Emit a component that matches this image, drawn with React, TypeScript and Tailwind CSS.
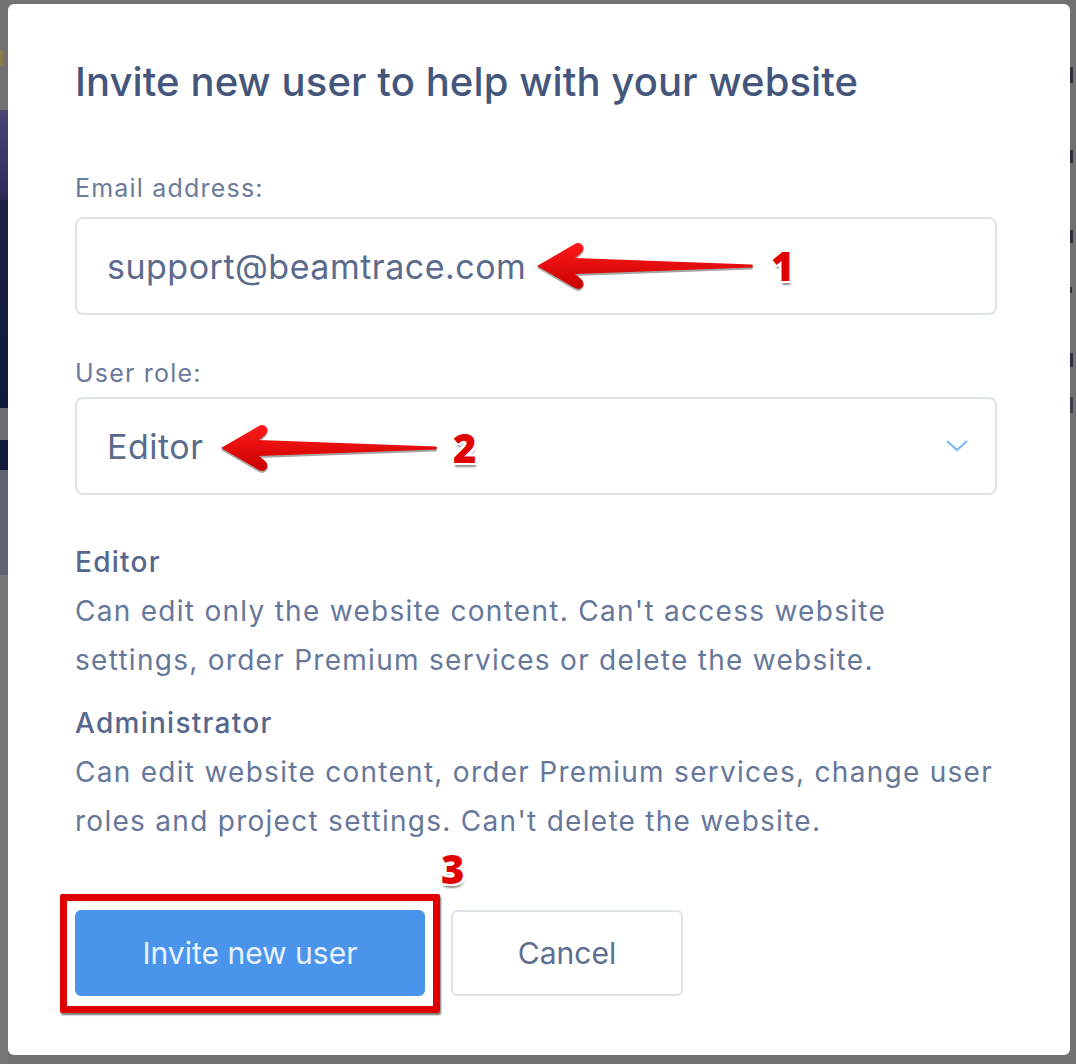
import React from 'react';

const Arrow: React.FC<{ className: string; id: string }> = ({ className, id }) => (
  <svg className={className} width="220" height="50" viewBox="0 0 220 50" fill="none">
    <defs>
      <linearGradient id={id} x1="0" y1="0" x2="0" y2="1">
        <stop offset="0" stopColor="#ff1a1a" />
        <stop offset="1" stopColor="#c80000" />
      </linearGradient>
    </defs>
    <path
      d="M2,27 L39,5.5 Q45,2 48,7 Q50,11 45,15 L40,19 L217,25.5 Q219,27 217,28.5 L40,35 L45,39 Q50,43 48,47 Q45,52 39,48.5 Z"
      fill="#000"
      opacity="0.35"
    />
    <path
      d="M2,25 L39,3.5 Q45,0 48,5 Q50,9 45,13 L40,17 L217,23.5 Q219,25 217,26.5 L40,33 L45,37 Q50,41 48,45 Q45,50 39,46.5 Z"
      fill={`url(#${id})`}
    />
  </svg>
);

const Badge: React.FC<{ n: string; className: string }> = ({ n, className }) => (
  <span
    className={`absolute text-[40px] leading-none font-extrabold text-[#e00000] [font-family:'Open_Sans',sans-serif] [text-shadow:-2px_-2px_0_#fff,2px_-2px_0_#fff,-2px_2px_0_#fff,2px_2px_0_#fff,0_-2px_0_#fff,0_2px_0_#fff,-2px_0_0_#fff,2px_0_0_#fff,1px_4px_2px_rgba(0,0,0,0.45)] ${className}`}
  >
    {n}
  </span>
);

const App: React.FC = () => {
  return (
    <div className="w-[1076px] h-[1064px] bg-[#727272] flex overflow-hidden [font-family:Inter,sans-serif]">
      {/* page behind the overlay, left edge */}
      <div className="w-[8px] shrink-0 flex flex-col">
        <div className="h-[50px] bg-[#717171]" />
        <div className="h-[16px] bg-[#8a7a4a] w-[3px]" />
        <div className="h-[44px] bg-[#717171]" />
        <div className="h-[90px] bg-gradient-to-b from-[#4b4675] to-[#2a2a55]" />
        <div className="h-[208px] bg-gradient-to-b from-[#1c2146] to-[#0f1a3b]" />
        <div className="h-[32px] bg-[#6c6e74]" />
        <div className="h-[30px] bg-[#111a3b]" />
        <div className="h-[105px] bg-[#5f6371]" />
        <div className="flex-1 bg-[#777777]" />
      </div>

      <div className="w-[1062px] shrink-0 pt-[4px] pb-[9px]">
        <div className="relative h-full bg-white rounded-[6px] pl-[67px] pr-[73px] pt-[54px]">
          <h1 className="text-[40px] leading-[48px] font-medium text-[#44567c] whitespace-nowrap tracking-[0.1px]">
            Invite new user to help with your website
          </h1>

          <label className="block mt-[66px] text-[25px] leading-[32px] tracking-[1.2px] text-[#6b7b9b]">Email address:</label>
          <div className="mt-[13px] h-[98px] border-2 border-[#dfe3ea] rounded-[8px] flex items-center px-[30px] text-[34px] tracking-[0.5px] text-[#5b6b8c]">
            support@beamtrace.com
          </div>

          <label className="block mt-[42px] text-[25px] leading-[32px] tracking-[1.2px] text-[#6b7b9b]">User role:</label>
          <div className="mt-[8px] h-[98px] border-2 border-[#dfe3ea] rounded-[8px] flex items-center justify-between pl-[30px] pr-[26px] text-[34px] tracking-[0.5px] text-[#5b6b8c]">
            <span>Editor</span>
            <svg width="24" height="14" viewBox="0 0 24 14" fill="none">
              <path d="M2 2 L12 11 L22 2" stroke="#7cb8f4" strokeWidth="2.2" />
            </svg>
          </div>

          <div className="mt-[43px] text-[28px] leading-[49px] tracking-[1.28px] text-[#66779a] whitespace-nowrap">
            <div className="font-medium text-[#55678c]">Editor</div>
            <div>Can edit only the website content. Can't access website</div>
            <div>settings, order Premium services or delete the website.</div>
            <div className="mt-[14px] font-medium text-[#55678c]">Administrator</div>
            <div>Can edit website content, order Premium services, change user</div>
            <div>roles and project settings. Can't delete the website.</div>
          </div>

          <div className="mt-[64px] flex gap-[26px]">
            <div className="relative">
              <button className="w-[350px] h-[86px] rounded-[6px] bg-[#4a94ec] text-[#eaf2fd] text-[30px]">
                Invite new user
              </button>
              <div className="absolute -left-[15px] -top-[16px] w-[380px] h-[119px] border-[7px] border-[#e10000] rounded-[2px] shadow-[1px_2px_2px_rgba(0,0,0,0.55)]" />
            </div>
            <button className="w-[232px] h-[86px] rounded-[6px] border-2 border-[#dfe3ea] bg-white text-[#5d6e90] text-[30px]">
              Cancel
            </button>
          </div>

          {/* annotations */}
          <Arrow id="g1" className="absolute left-[527px] top-[237px]" />
          <Badge n="1" className="left-[763px] top-[242px]" />
          <Arrow id="g2" className="absolute left-[211px] top-[419px]" />
          <Badge n="2" className="left-[445px] top-[424px]" />
          <Badge n="3" className="left-[433px] top-[845px]" />
        </div>
      </div>

      {/* page behind the overlay, right edge */}
      <div className="flex-1 flex flex-col">
        <div className="h-[67px]" />
        <div className="h-[16px] w-[3px] bg-[#2b2f3d]" />
        <div className="h-[67px]" />
        <div className="h-[13px] w-[3px] bg-[#2b2f3d]" />
        <div className="h-[67px]" />
        <div className="h-[13px] w-[3px] bg-[#2b2f3d]" />
        <div className="h-[44px]" />
        <div className="h-[6px] w-[2px] bg-[#2b2f3d]" />
        <div className="h-[60px]" />
        <div className="h-[14px] w-[3px] bg-[#2b2f3d]" />
        <div className="h-[30px]" />
        <div className="h-[16px] w-[3px] bg-[#3a3e4a]" />
      </div>
    </div>
  );
};

export default App;
